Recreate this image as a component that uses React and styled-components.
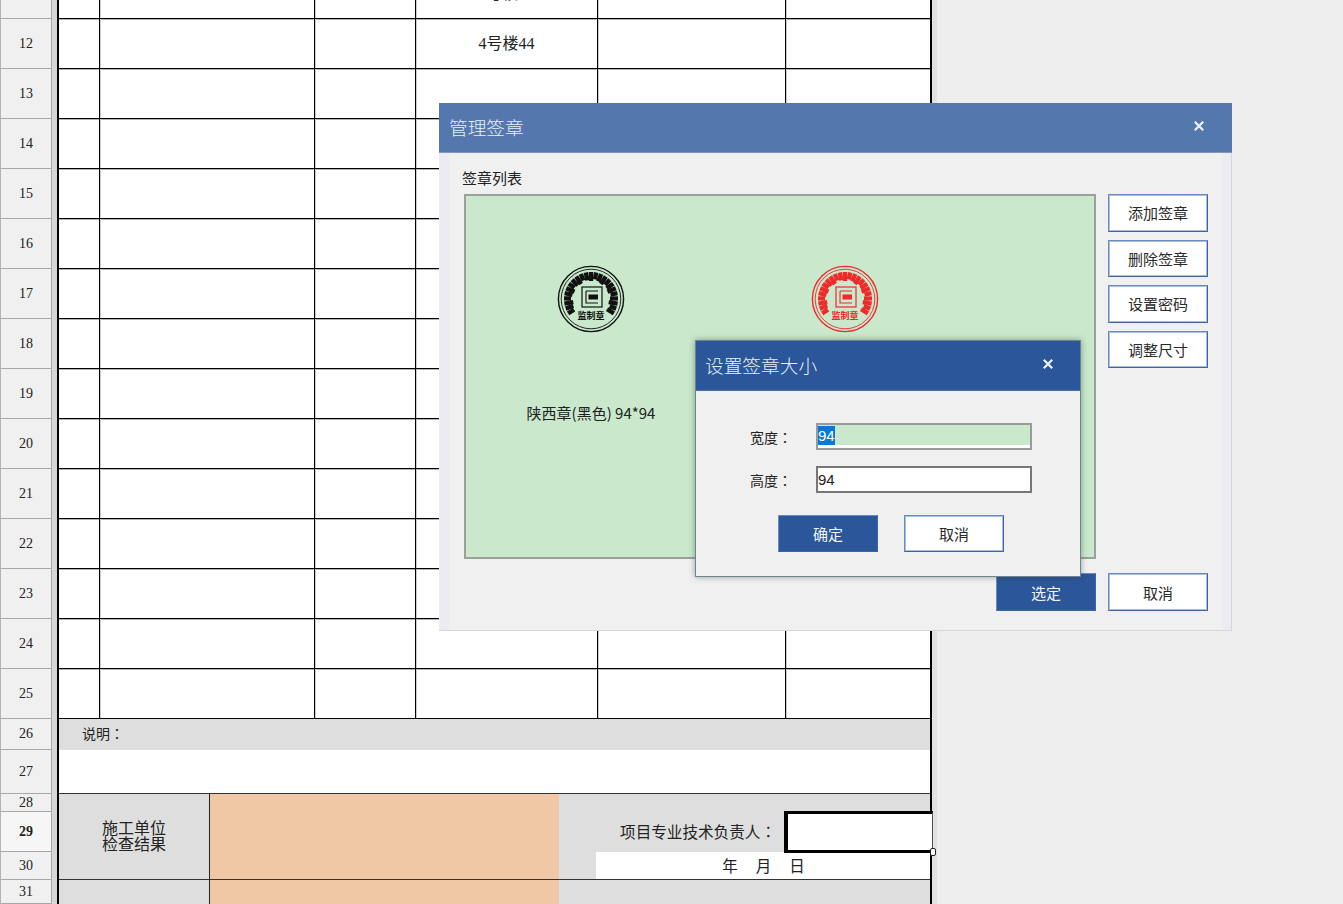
import React from "react";
import styled, { createGlobalStyle } from "styled-components";

const Global = createGlobalStyle`
  html, body { margin: 0; padding: 0; background: #eeeeee; }
  body { font-family: "Liberation Serif", "Noto Sans CJK SC", serif; color: #222; }
`;

const CJK = `"Noto Sans CJK SC", "Liberation Sans", sans-serif`;
const SHEET = `"Liberation Serif", "Noto Sans CJK SC", serif`;

const Page = styled.div`
  position: relative;
  display: flex;
  width: 1343px;
  height: 904px;
  overflow: hidden;
  background: #eeeeee;
`;

const RowHeaders = styled.div`
  display: flex;
  flex-direction: column;
  width: 52px;
  margin-top: -31px;
  flex: none;
`;

const RowHeader = styled.div`
  display: flex;
  align-items: center;
  justify-content: center;
  box-sizing: border-box;
  height: ${(p) => p.$h}px;
  flex: none;
  background: ${(p) => (p.$active ? "#f6f6f6" : "#f0f0f0")};
  border-left: 1px solid #b4b4b4;
  border-right: 1px solid #a8a8a8;
  border-bottom: 1px solid #a8a8a8;
  font-family: ${SHEET};
  font-size: 14px;
  font-weight: ${(p) => (p.$active ? 700 : 400)};
  color: #222;
`;

const Gutter = styled.div`
  width: 5px;
  flex: none;
  background: #d6d6d6;
`;

const Sheet = styled.div`
  box-sizing: border-box;
  width: 875px;
  flex: none;
  margin-top: -31px;
  border-left: 2px solid #000;
  border-right: 2px solid #000;
  height: 1000px;
  background: #fff;
`;

const SideShade = styled.div`
  width: 5px;
  flex: none;
  background: #e2e2e2;
`;

const Row = styled.div`
  display: grid;
  grid-template-columns: 41px 215px 101px 182px 188px 144px;
  grid-template-rows: minmax(0, 1fr);
  height: 50px;
  box-sizing: border-box;
  border-bottom: 1px solid #000;
  box-shadow: 0 1px 0 #b4b4b4;
`;

const Cell = styled.div`
  display: flex;
  align-items: center;
  justify-content: center;
  padding-bottom: 3px;
  border-right: ${(p) => (p.$last ? "none" : "1px solid #000")};
  box-shadow: ${(p) => (p.$last ? "none" : "1px 0 0 #cccccc")};
  font-family: ${SHEET};
  font-size: 16px;
  color: #222;
`;

const Colon = styled.span`
  font-family: "Noto Sans CJK TC", sans-serif;
`;

const NoteHead = styled.div`
  display: flex;
  align-items: center;
  box-sizing: border-box;
  height: 31px;
  padding: 0 0 4px 23px;
  background: #dedede;
  font-family: ${CJK};
  font-size: 14px;
  color: #222;
`;

const NoteBody = styled.div`
  box-sizing: border-box;
  height: 44px;
  background: #fff;
  border-bottom: 1px solid #333;
`;

const ResultRow = styled.div`
  display: grid;
  grid-template-columns: 151px 349px 1fr;
  grid-template-rows: minmax(0, 1fr);
  box-sizing: border-box;
  height: ${(p) => p.$h}px;
  border-bottom: 1px solid #333;
`;

const ResultLabel = styled.div`
  display: flex;
  align-items: center;
  justify-content: center;
  padding-bottom: 4px;
  background: #dedede;
  border-right: 1px solid #222;
  font-family: ${CJK};
  font-size: 16px;
  line-height: 16px;
  text-align: center;
  color: #222;
`;

const OrangeCell = styled.div`
  background: #f0c8a6;
`;

const SignCell = styled.div`
  display: flex;
  flex-direction: column;
  background: #dedede;
  padding-top: 17px;
  min-width: 0;
`;

const SignRow = styled.div`
  display: flex;
  align-items: center;
  justify-content: flex-end;
  gap: 8px;
  height: 41px;
  flex: none;
  font-family: ${CJK};
  font-size: 15.6px;
  color: #222;
`;

const SignCaption = styled.span`
  padding-bottom: 2px;
`;

const SelectedCell = styled.div`
  position: relative;
  box-sizing: border-box;
  width: 149px;
  height: 42px;
  margin-right: -3px;
  background: #fff;
  border: 3px solid #000;
  border-left-width: 4px;
  border-right: 1px solid #555;
`;

const Handle = styled.span`
  position: absolute;
  right: -4px;
  bottom: -6px;
  width: 4px;
  height: 6px;
  background: #fff;
  border: 1px solid #222;
  border-radius: 2px;
`;

const DateBar = styled.div`
  display: flex;
  align-items: center;
  justify-content: center;
  gap: 18px;
  margin-left: 37px;
  padding: 0 0 2px 1px;
  box-sizing: border-box;
  height: 27px;
  background: #fff;
  font-family: ${CJK};
  font-size: 15.5px;
  color: #222;
`;

const Dialog = styled.div`
  position: absolute;
  left: 439px;
  top: 103px;
  width: 793px;
  height: 528px;
  display: flex;
  flex-direction: column;
  background: #ecebf1;
  box-shadow: inset -1px -1px 0 #d6d6dc;
  font-family: ${CJK};
`;

const SmallDialog = styled.div`
  position: absolute;
  left: 695px;
  top: 340px;
  box-sizing: border-box;
  width: 386px;
  height: 237px;
  display: flex;
  flex-direction: column;
  background: #f0f0f0;
  border: 1px solid #73828f;
  box-shadow: 0 0 6px rgba(40, 60, 50, 0.45);
  font-family: ${CJK};
`;

const TitleBar = styled.div`
  display: flex;
  align-items: center;
  justify-content: space-between;
  box-sizing: border-box;
  height: ${(p) => p.$h}px;
  flex: none;
  padding: 0 ${(p) => p.$right}px 3px ${(p) => p.$left}px;
  background: ${(p) => p.$bg};
  border-bottom: 1px solid ${(p) => p.$line};
  color: #e8eef6;
  font-size: 18.7px;
  font-weight: 300;
`;

const CloseIcon = styled.svg`
  display: block;
  width: 10px;
  height: 10px;
`;

const DialogInner = styled.div`
  flex: 1;
  margin: 0 10px 1px 10px;
  padding: 15px 0 0 15px;
  background: #f0f0f0;
  display: flex;
  flex-direction: column;
`;

const SectionLabel = styled.div`
  height: 26px;
  margin-left: -2px;
  font-size: 15px;
  line-height: 20px;
  color: #222;
`;

const MainRow = styled.div`
  display: flex;
  gap: 12px;
`;

const SignList = styled.div`
  box-sizing: border-box;
  display: flex;
  gap: 4px;
  width: 632px;
  height: 365px;
  padding-top: 69px;
  background: #c9e8cc;
  border: 2px solid #9aa09a;
`;

const SignItem = styled.div`
  display: flex;
  flex-direction: column;
  align-items: center;
  width: 250px;
  flex: none;
`;

const SignName = styled.div`
  margin-top: 70px;
  font-size: 15px;
  line-height: 20px;
  white-space: nowrap;
  color: #222;
`;

const SideButtons = styled.div`
  display: flex;
  flex-direction: column;
  gap: 8px;
`;

const Button = styled.div`
  display: flex;
  align-items: center;
  justify-content: center;
  box-sizing: border-box;
  width: 100px;
  height: ${(p) => p.$h || 37.5}px;
  font-size: 15px;
  color: ${(p) => (p.$primary ? "#f1f5fa" : "#2a2a2a")};
  background: ${(p) => (p.$primary ? "#2b5699" : "#ffffff")};
  border: 1px solid #6b8cc0;
  border-right-color: #3f65a3;
  border-bottom-color: #3f65a3;
  box-shadow: ${(p) => (p.$primary ? "none" : "inset 0 0 0 1px #a9bddc")};
`;

const ActionRow = styled.div`
  display: flex;
  justify-content: flex-end;
  gap: 12px;
  width: 744px;
  margin-top: 14px;
`;

const SmallBody = styled.div`
  flex: 1;
  padding: 32px 0 0 54px;
  display: flex;
  flex-direction: column;
`;

const FormGrid = styled.div`
  display: grid;
  grid-template-columns: 66px 216px;
  grid-auto-rows: 27px;
  row-gap: 16px;
  align-items: center;
`;

const FormLabel = styled.div`
  font-size: 14px;
  color: #222;
`;

const Field = styled.div`
  display: flex;
  align-items: center;
  box-sizing: border-box;
  height: 27px;
  padding: 0 0 1px 0;
  border: 2px solid ${(p) => (p.$focus ? "#9a9a9a" : "#777777")};
  background: ${(p) =>
    p.$focus ? "linear-gradient(#c9e8cc 20px, #ffffff 20px)" : "#ffffff"};
  font-family: "Liberation Sans", sans-serif;
  font-size: 15px;
  color: #222;
`;

const Selected = styled.span`
  background: #0a78d7;
  color: #fff;
  line-height: 19px;
  margin-top: -2px;
`;

const FormActions = styled.div`
  display: flex;
  gap: 26px;
  margin: 22px 0 0 28px;
`;

const Stamp = ({ color }) => {
  const ticks = [];
  const n = 23;
  for (let i = 0; i < n; i++) {
    const a = -122 + (244 * i) / (n - 1);
    const h = 7 + ((i * 7) % 3);
    ticks.push(
      <rect key={i} x={-2.2} y={-27} width={4.4} height={h} fill={color} transform={`rotate(${a})`} />
    );
  }
  return (
    <svg width="68" height="68" viewBox="-34 -34 68 68" style={{ display: "block" }}>
      <circle r="32.6" fill="none" stroke={color} strokeWidth="1.4" />
      <circle r="29.8" fill="none" stroke={color} strokeWidth="0.9" />
      {ticks}
      <rect x="-9" y="-12" width="20" height="20" fill="none" stroke={color} strokeWidth="1.2" />
      <path d="M-5 -8H7M-5 -8V4H7" fill="none" stroke={color} strokeWidth="1.1" />
      <rect x="-2.5" y="-4.5" width="9.5" height="5" fill={color} />
      <text x="0" y="20" textAnchor="middle" fontSize="9" fontWeight="700" fill={color} fontFamily={CJK}>
        监制章
      </text>
    </svg>
  );
};

const Close = () => (
  <CloseIcon viewBox="0 0 10 10">
    <path d="M0.8 0.8L9.2 9.2M9.2 0.8L0.8 9.2" stroke="#eef3f9" strokeWidth="2.2" fill="none" />
  </CloseIcon>
);

const bodyRows = Array.from({ length: 15 }, (_, i) => i + 11);

const topText = { 11: "4号楼43", 12: "4号楼44" };

export default function App() {
  return (
    <Page>
      <Global />
      <RowHeaders>
        {bodyRows.map((n) => (
          <RowHeader key={n} $h={50}>
            {n > 11 ? n : ""}
          </RowHeader>
        ))}
        <RowHeader $h={31}>26</RowHeader>
        <RowHeader $h={44}>27</RowHeader>
        <RowHeader $h={18}>28</RowHeader>
        <RowHeader $h={40} $active>
          29
        </RowHeader>
        <RowHeader $h={28}>30</RowHeader>
        <RowHeader $h={24}>31</RowHeader>
      </RowHeaders>
      <Gutter />
      <Sheet>
        {bodyRows.map((n) => (
          <Row key={n}>
            <Cell />
            <Cell />
            <Cell />
            <Cell>{topText[n]}</Cell>
            <Cell />
            <Cell $last />
          </Row>
        ))}
        <NoteHead>
          说明<Colon>：</Colon>
        </NoteHead>
        <NoteBody />
        <ResultRow $h={86}>
          <ResultLabel>
            施工单位
            <br />
            检查结果
          </ResultLabel>
          <OrangeCell />
          <SignCell>
            <SignRow>
              <SignCaption>
                项目专业技术负责人<Colon>：</Colon>
              </SignCaption>
              <SelectedCell>
                <Handle />
              </SelectedCell>
            </SignRow>
            <DateBar>
              <span>年</span>
              <span>月</span>
              <span>日</span>
            </DateBar>
          </SignCell>
        </ResultRow>
        <ResultRow $h={40}>
          <ResultLabel />
          <OrangeCell />
          <SignCell />
        </ResultRow>
      </Sheet>
      <SideShade />

      <Dialog>
        <TitleBar $h={50} $left={10} $right={28} $bg="#5478ae" $line="#7d97c2">
          管理签章
          <Close />
        </TitleBar>
        <DialogInner>
          <SectionLabel>签章列表</SectionLabel>
          <MainRow>
            <SignList>
              <SignItem>
                <Stamp color="#111111" />
                <SignName>陕西章(黑色) 94*94</SignName>
              </SignItem>
              <SignItem>
                <Stamp color="#f02a2a" />
                <SignName>陕西章(红色) 94*94</SignName>
              </SignItem>
            </SignList>
            <SideButtons>
              <Button>添加签章</Button>
              <Button>删除签章</Button>
              <Button>设置密码</Button>
              <Button>调整尺寸</Button>
            </SideButtons>
          </MainRow>
          <ActionRow>
            <Button $primary $h={38}>
              选定
            </Button>
            <Button $h={38}>取消</Button>
          </ActionRow>
        </DialogInner>
      </Dialog>

      <SmallDialog>
        <TitleBar $h={50} $left={9} $right={27} $bg="#2b5699" $line="#4a70aa">
          设置签章大小
          <Close />
        </TitleBar>
        <SmallBody>
          <FormGrid>
            <FormLabel>
              宽度<Colon>：</Colon>
            </FormLabel>
            <Field $focus>
              <Selected>94</Selected>
            </Field>
            <FormLabel>
              高度<Colon>：</Colon>
            </FormLabel>
            <Field>94</Field>
          </FormGrid>
          <FormActions>
            <Button $primary $h={37}>
              确定
            </Button>
            <Button $h={37}>取消</Button>
          </FormActions>
        </SmallBody>
      </SmallDialog>
    </Page>
  );
}
